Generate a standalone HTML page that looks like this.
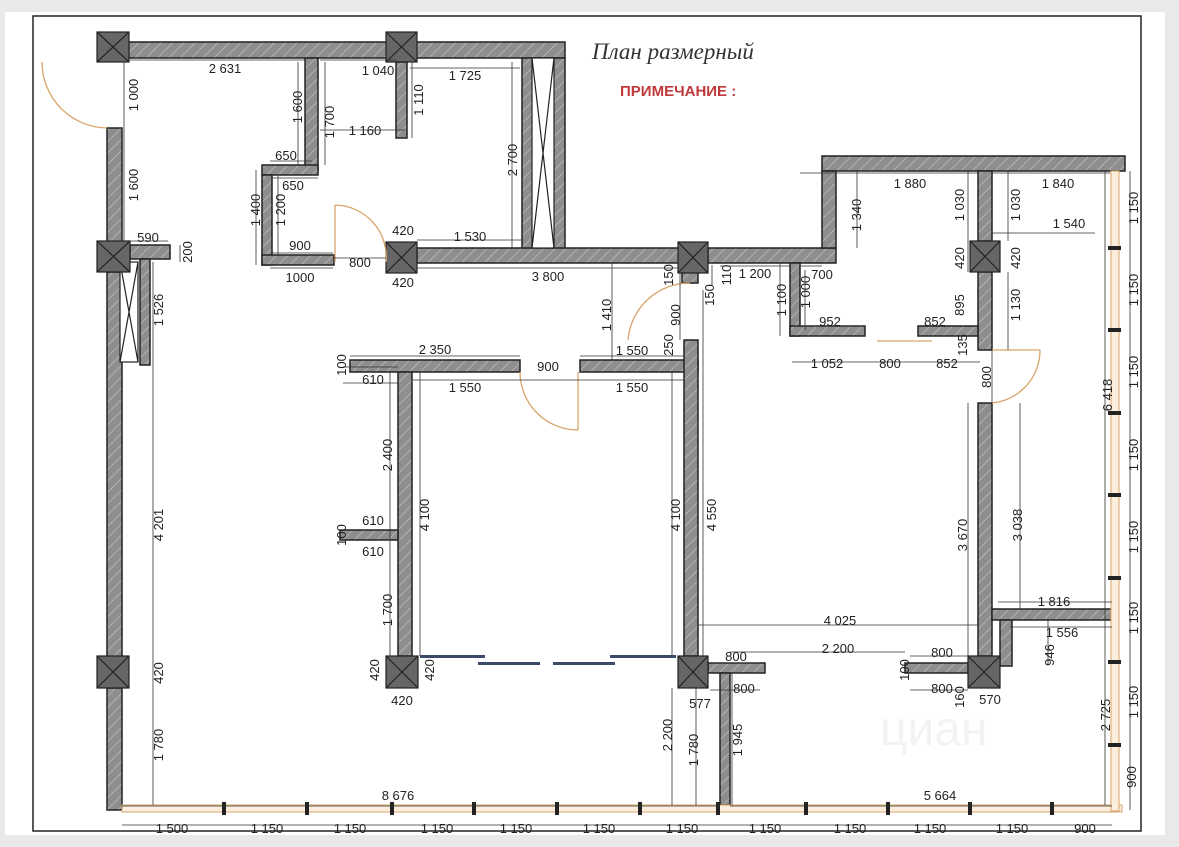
<!DOCTYPE html>
<html><head><meta charset="utf-8"><style>
html,body{margin:0;padding:0;background:#e9e9e9;}
svg{display:block}
text{font-family:"Liberation Sans",sans-serif;font-size:13px;fill:#222}
.c{fill:#666;stroke:#222;stroke-width:1.2}
.d{stroke:#333;stroke-width:0.8;fill:none}
.dr{stroke:#d9a46b;stroke-width:1.3;fill:none}
.win{fill:#fbeedc;stroke:#d9a46b;stroke-width:1}
</style></head><body>
<svg width="1179" height="847" viewBox="0 0 1179 847" xmlns="http://www.w3.org/2000/svg">
<defs>
<pattern id="h" width="8" height="8" patternUnits="userSpaceOnUse" patternTransform="rotate(45)"><rect width="8" height="8" fill="#8e8e8e"/><line x1="0" y1="0" x2="0" y2="8" stroke="#c8c8c8" stroke-width="1.2"/></pattern>
</defs>
<rect x="5" y="12" width="1160" height="823" fill="#fff"/>
<rect x="33" y="16" width="1108" height="815" fill="none" stroke="#222" stroke-width="1.5"/>

<g fill="url(#h)" stroke="#222" stroke-width="1.5">
<rect x="128" y="42" width="437" height="16"/>
<rect x="522" y="58" width="43" height="192"/>
<rect x="417" y="248" width="263" height="15"/>
<rect x="708" y="248" width="128" height="15"/>
<rect x="822" y="156" width="303" height="15"/>
<rect x="822" y="171" width="14" height="77"/>
<rect x="107" y="128" width="15" height="114"/>
<rect x="107" y="272" width="15" height="385"/>
<rect x="107" y="688" width="15" height="122"/>
<rect x="130" y="245" width="40" height="14"/>
<rect x="140" y="259" width="10" height="106"/>
<rect x="305" y="58" width="13" height="112"/>
<rect x="262" y="165" width="56" height="10"/>
<rect x="262" y="175" width="10" height="90"/>
<rect x="262" y="255" width="72" height="10"/>
<rect x="396" y="62" width="11" height="76"/>
<rect x="978" y="171" width="14" height="70"/>
<rect x="978" y="272" width="14" height="78"/>
<rect x="978" y="403" width="14" height="253"/>
<rect x="790" y="263" width="10" height="73"/>
<rect x="790" y="326" width="75" height="10"/>
<rect x="918" y="326" width="60" height="10"/>
<rect x="350" y="360" width="170" height="12"/>
<rect x="580" y="360" width="118" height="12"/>
<rect x="398" y="372" width="14" height="284"/>
<rect x="684" y="340" width="14" height="316"/>
<rect x="340" y="530" width="58" height="10"/>
<rect x="708" y="663" width="57" height="10"/>
<rect x="720" y="673" width="10" height="132"/>
<rect x="992" y="609" width="123" height="11"/>
<rect x="1000" y="620" width="12" height="46"/>
<rect x="905" y="663" width="63" height="10"/>
<rect x="682" y="263" width="16" height="20"/>
</g>
<g fill="#fff" stroke="#222" stroke-width="1.2">
<rect x="532" y="58" width="22" height="190"/><path d="M532 58L554 248M554 58L532 248" fill="none"/>
<rect x="120" y="262" width="18" height="100"/><path d="M120 262L138 362M138 262L120 362" fill="none"/>
</g>
<g class="c">
<rect x="97" y="32" width="32" height="30"/><path d="M97 32l32 30M129 32l-32 30" fill="none"/>
<rect x="386" y="32" width="31" height="30"/><path d="M386 32l31 30M417 32l-31 30" fill="none"/>
<rect x="97" y="241" width="33" height="31"/><path d="M97 241l33 31M130 241l-33 31" fill="none"/>
<rect x="386" y="242" width="31" height="31"/><path d="M386 242l31 31M417 242l-31 31" fill="none"/>
<rect x="678" y="242" width="30" height="31"/><path d="M678 242l30 31M708 242l-30 31" fill="none"/>
<rect x="970" y="241" width="30" height="31"/><path d="M970 241l30 31M1000 241l-30 31" fill="none"/>
<rect x="97" y="656" width="32" height="32"/><path d="M97 656l32 32M129 656l-32 32" fill="none"/>
<rect x="386" y="656" width="32" height="32"/><path d="M386 656l32 32M418 656l-32 32" fill="none"/>
<rect x="678" y="656" width="30" height="32"/><path d="M678 656l30 32M708 656l-30 32" fill="none"/>
<rect x="968" y="656" width="32" height="32"/><path d="M968 656l32 32M1000 656l-32 32" fill="none"/>
</g>
<rect class="win" x="122" y="805" width="1000" height="7"/>
<rect class="win" x="1111" y="171" width="8" height="640"/>
<g fill="#222">
<rect x="222" y="802" width="4" height="13"/><rect x="305" y="802" width="4" height="13"/><rect x="390" y="802" width="4" height="13"/><rect x="472" y="802" width="4" height="13"/><rect x="555" y="802" width="4" height="13"/><rect x="638" y="802" width="4" height="13"/><rect x="804" y="802" width="4" height="13"/><rect x="886" y="802" width="4" height="13"/><rect x="968" y="802" width="4" height="13"/><rect x="1050" y="802" width="4" height="13"/><rect x="716" y="802" width="4" height="13"/>
<rect x="1108" y="246" width="13" height="4"/><rect x="1108" y="328" width="13" height="4"/><rect x="1108" y="411" width="13" height="4"/><rect x="1108" y="493" width="13" height="4"/><rect x="1108" y="576" width="13" height="4"/><rect x="1108" y="660" width="13" height="4"/><rect x="1108" y="743" width="13" height="4"/>
</g>
<g fill="#3b4a6b">
<rect x="420" y="655" width="65" height="3"/><rect x="478" y="662" width="62" height="3"/><rect x="553" y="662" width="62" height="3"/><rect x="610" y="655" width="66" height="3"/>
</g>
<g class="dr">
<path d="M42 62A66 66 0 0 0 107 128"/>
<path d="M335 205V262 M335 205A52 52 0 0 1 386 262"/>
<path d="M628 340A62 62 0 0 1 690 283"/>
<path d="M578 372V430 M578 430A58 58 0 0 1 520 372"/>
<path d="M992 350H1040 M1040 350A53 53 0 0 1 992 403"/>
<path d="M877 341H932"/>
</g>
<g class="d">
<path d="M130 60H305M320 60H396M410 68H520M320 130H405M270 161H312M272 178H318M272 253H333M270 268H333M333 258H386M417 240H522M417 268H678M130 241H168M800 173H978M992 173H1110M992 233H1095M720 266H790M800 266H822M795 326H865M792 362H980M350 356H520M343 367H398M343 383H398M580 356H684M698 625H978M730 652H905M710 663H760M710 690H760M910 656H968M910 690H968M998 602H1112M1010 627H1112M122 806H720M730 806H1112M122 825H1112M413 380H684"/>
<path d="M124 62V128M124 128V241M298 62V165M325 62V165M412 62V138M256 170V265M278 176V255M512 62V248M180 245V262M153 262V365M153 365V656M153 656V688M153 688V805M612 263V360M680 273V340M712 265V285M857 171V248M968 171V241M1008 171V241M968 241V272M1008 272V350M780 263V336M805 270V330M992 350V403M1105 171V805M390 372V656M420 372V656M672 372V656M703 290V656M968 403V656M1020 403V609M1048 620V665M672 688V805M696 688V805M732 673V805M1130 171V810"/>
</g>
<text x="592" y="59" style="font-family:'Liberation Serif',serif;font-style:italic;font-size:23px;fill:#333">План размерный</text>
<text x="620" y="96" style="font-size:15px;font-weight:bold;fill:#c0393b">ПРИМЕЧАНИЕ :</text>
<g text-anchor="middle">
<text x="225" y="73">2 631</text><text x="378" y="75">1 040</text><text x="465" y="80">1 725</text><text x="365" y="135">1 160</text>
<text x="286" y="160">650</text><text x="293" y="190">650</text><text x="300" y="250">900</text><text x="360" y="267">800</text>
<text x="300" y="282">1000</text><text x="403" y="235">420</text><text x="403" y="287">420</text><text x="470" y="241">1 530</text>
<text x="548" y="281">3 800</text><text x="148" y="242">590</text><text x="910" y="188">1 880</text><text x="1058" y="188">1 840</text>
<text x="1069" y="228">1 540</text><text x="755" y="278">1 200</text><text x="822" y="279">700</text><text x="830" y="326">952</text>
<text x="935" y="326">852</text><text x="827" y="368">1 052</text><text x="890" y="368">800</text><text x="947" y="368">852</text>
<text x="435" y="354">2 350</text><text x="373" y="384">610</text><text x="465" y="392">1 550</text><text x="548" y="371">900</text>
<text x="632" y="355">1 550</text><text x="632" y="392">1 550</text><text x="373" y="525">610</text><text x="373" y="556">610</text>
<text x="840" y="625">4 025</text><text x="1054" y="606">1 816</text><text x="1062" y="637">1 556</text><text x="838" y="653">2 200</text>
<text x="736" y="661">800</text><text x="744" y="693">800</text><text x="942" y="657">800</text><text x="942" y="693">800</text>
<text x="700" y="708">577</text><text x="990" y="704">570</text><text x="402" y="705">420</text>
<text x="398" y="800">8 676</text><text x="940" y="800">5 664</text>
<text x="172" y="833">1 500</text><text x="267" y="833">1 150</text><text x="350" y="833">1 150</text><text x="437" y="833">1 150</text>
<text x="516" y="833">1 150</text><text x="599" y="833">1 150</text><text x="682" y="833">1 150</text><text x="765" y="833">1 150</text>
<text x="850" y="833">1 150</text><text x="930" y="833">1 150</text><text x="1012" y="833">1 150</text><text x="1085" y="833">900</text>
</g>
<g text-anchor="middle">
<text transform="translate(138,95) rotate(-90)">1 000</text><text transform="translate(138,185) rotate(-90)">1 600</text>
<text transform="translate(302,107) rotate(-90)">1 600</text><text transform="translate(334,122) rotate(-90)">1 700</text>
<text transform="translate(423,100) rotate(-90)">1 110</text><text transform="translate(260,210) rotate(-90)">1 400</text>
<text transform="translate(285,210) rotate(-90)">1 200</text><text transform="translate(517,160) rotate(-90)">2 700</text>
<text transform="translate(192,252) rotate(-90)">200</text><text transform="translate(163,310) rotate(-90)">1 526</text>
<text transform="translate(163,525) rotate(-90)">4 201</text><text transform="translate(163,673) rotate(-90)">420</text>
<text transform="translate(163,745) rotate(-90)">1 780</text><text transform="translate(611,315) rotate(-90)">1 410</text>
<text transform="translate(673,275) rotate(-90)">150</text><text transform="translate(680,315) rotate(-90)">900</text>
<text transform="translate(714,295) rotate(-90)">150</text><text transform="translate(731,275) rotate(-90)">110</text>
<text transform="translate(673,345) rotate(-90)">250</text><text transform="translate(861,215) rotate(-90)">1 340</text>
<text transform="translate(964,205) rotate(-90)">1 030</text><text transform="translate(1020,205) rotate(-90)">1 030</text>
<text transform="translate(964,258) rotate(-90)">420</text><text transform="translate(1020,258) rotate(-90)">420</text>
<text transform="translate(786,300) rotate(-90)">1 100</text><text transform="translate(810,292) rotate(-90)">1 000</text>
<text transform="translate(964,305) rotate(-90)">895</text><text transform="translate(1020,305) rotate(-90)">1 130</text>
<text transform="translate(967,345) rotate(-90)">135</text><text transform="translate(991,377) rotate(-90)">800</text>
<text transform="translate(1112,395) rotate(-90)">6 418</text><text transform="translate(392,455) rotate(-90)">2 400</text>
<text transform="translate(429,515) rotate(-90)">4 100</text><text transform="translate(680,515) rotate(-90)">4 100</text>
<text transform="translate(716,515) rotate(-90)">4 550</text><text transform="translate(392,610) rotate(-90)">1 700</text>
<text transform="translate(346,535) rotate(-90)">100</text><text transform="translate(346,365) rotate(-90)">100</text>
<text transform="translate(967,535) rotate(-90)">3 670</text><text transform="translate(1022,525) rotate(-90)">3 038</text>
<text transform="translate(1054,655) rotate(-90)">946</text><text transform="translate(909,670) rotate(-90)">100</text>
<text transform="translate(964,697) rotate(-90)">160</text><text transform="translate(1110,715) rotate(-90)">2 725</text>
<text transform="translate(1136,777) rotate(-90)">900</text><text transform="translate(672,735) rotate(-90)">2 200</text>
<text transform="translate(698,750) rotate(-90)">1 780</text><text transform="translate(742,740) rotate(-90)">1 945</text>
<text transform="translate(379,670) rotate(-90)">420</text><text transform="translate(434,670) rotate(-90)">420</text>
<text transform="translate(1138,208) rotate(-90)">1 150</text><text transform="translate(1138,290) rotate(-90)">1 150</text>
<text transform="translate(1138,372) rotate(-90)">1 150</text><text transform="translate(1138,455) rotate(-90)">1 150</text>
<text transform="translate(1138,537) rotate(-90)">1 150</text><text transform="translate(1138,618) rotate(-90)">1 150</text>
<text transform="translate(1138,702) rotate(-90)">1 150</text>
</g>
<text x="880" y="745" style="font-size:48px;fill:#f3f3f3">циан</text>
</svg>
</body></html>
